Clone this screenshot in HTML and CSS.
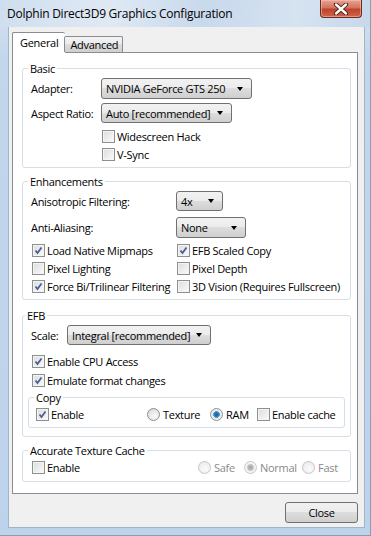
FILE: index.html
```html
<!DOCTYPE html>
<html lang="en">
  <head>
    <meta charset="UTF-8" />
    <title>Dolphin Direct3D9 Graphics Configuration</title>
    <link rel="stylesheet" href="styles.css">
  </head>
  <body>
    <div class="window">
      <div class="titlebar">
        <span class="title">Dolphin Direct3D9 Graphics Configuration</span>
        <div class="close-x">
          <svg width="16" height="12" viewBox="0 0 16 12">
            <path d="M3 1.5 L13 10.5 M13 1.5 L3 10.5" stroke="#3b1a14" stroke-width="4.2" stroke-linecap="round" />
            <path d="M3 1.5 L13 10.5 M13 1.5 L3 10.5" stroke="#ffffff" stroke-width="2.4" stroke-linecap="round" />
          </svg>
        </div>
      </div>

      <div class="client">
        <div class="tabs">
          <div class="tab active">General</div>
          <div class="tab">Advanced</div>
        </div>

        <div class="panel">
          <!-- Basic -->
          <fieldset class="group basic">
            <legend>Basic</legend>
            <div class="row row-21">
              <span class="lbl">Adapter:</span>
              <div class="combo w-adapter">NVIDIA GeForce GTS 250</div>
            </div>
            <div class="row row-20 gap-4">
              <span class="lbl">Aspect Ratio:</span>
              <div class="combo w-aspect">Auto [recommended]</div>
            </div>
            <div class="row check-row gap-4">
              <span class="lbl"></span>
              <label class="check"><span class="box"></span>Widescreen Hack</label>
            </div>
            <div class="row check-row">
              <span class="lbl"></span>
              <label class="check"><span class="box"></span>V-Sync</label>
            </div>
          </fieldset>

          <!-- Enhancements -->
          <fieldset class="group enh">
            <legend>Enhancements</legend>
            <div class="row row-20">
              <span class="lbl">Anisotropic Filtering:</span>
              <div class="combo w-aniso">4x</div>
            </div>
            <div class="row row-21 gap-6">
              <span class="lbl">Anti-Aliasing:</span>
              <div class="combo w-aa">None</div>
            </div>
            <div class="row check-row gap-3">
              <label class="check lbl"><span class="box checked"></span>Load Native Mipmaps</label>
              <label class="check"><span class="box checked"></span>EFB Scaled Copy</label>
            </div>
            <div class="row check-row">
              <label class="check lbl"><span class="box"></span>Pixel Lighting</label>
              <label class="check"><span class="box"></span>Pixel Depth</label>
            </div>
            <div class="row check-row">
              <label class="check lbl"><span class="box checked"></span>Force Bi/Trilinear Filtering</label>
              <label class="check"><span class="box"></span>3D Vision (Requires Fullscreen)</label>
            </div>
          </fieldset>

          <!-- EFB -->
          <fieldset class="group efb">
            <legend>EFB</legend>
            <div class="row row-20">
              <span class="lbl">Scale:</span>
              <div class="combo w-scale">Integral [recommended]</div>
            </div>
            <div class="row check-row tall gap-7">
              <label class="check"><span class="box checked"></span>Enable CPU Access</label>
            </div>
            <div class="row check-row tall">
              <label class="check"><span class="box checked"></span>Emulate format changes</label>
            </div>

            <fieldset class="group copy">
              <legend>Copy</legend>
              <div class="row check-row">
                <label class="check w-copy-enable"><span class="box checked"></span>Enable</label>
                <label class="check w-texture"><span class="radio"></span>Texture</label>
                <label class="check w-ram"><span class="radio on"></span>RAM</label>
                <label class="check"><span class="box"></span>Enable cache</label>
              </div>
            </fieldset>
          </fieldset>

          <!-- Accurate Texture Cache -->
          <fieldset class="group atc">
            <legend>Accurate Texture Cache</legend>
            <div class="row check-row">
              <label class="check w-atc-enable"><span class="box"></span>Enable</label>
              <label class="check disabled w-safe"><span class="radio"></span>Safe</label>
              <label class="check disabled w-normal"><span class="radio on"></span>Normal</label>
              <label class="check disabled"><span class="radio"></span>Fast</label>
            </div>
          </fieldset>
        </div>

        <div class="buttons">
          <button class="btn">Close</button>
        </div>
      </div>
    </div>
  </body>
</html>
```

FILE: styles.css
```css
html,
body {
  margin: 0;
  padding: 0;
}
body {
  width: 371px;
  height: 536px;
  overflow: hidden;
  font-family: "Open Sans", "Noto Sans", sans-serif;
  font-size: 11px;
  letter-spacing: -0.3px;
  color: #000;
  background: #c4d7ec;
}
.window {
  display: flex;
  flex-direction: column;
  width: 371px;
  height: 536px;
  box-sizing: border-box;
  background: linear-gradient(#d6e3f1, #c2d6ec 60px, #bdd3eb);
  border-right: 1px solid #8d9db0;
  border-bottom: 1px solid #8d9db0;
}
.titlebar {
  height: 27px;
  display: flex;
  justify-content: space-between;
  align-items: flex-start;
  background: linear-gradient(100deg, #cfdeee 0%, #dfe9f4 30%, #c8d9ec 55%, #d6e3f1 80%, #c7d8eb 100%);
}
.title {
  margin: 6px 0 0 7px;
  font-size: 12px;
  letter-spacing: -0.25px;
  line-height: 16px;
}
.close-x {
  width: 42px;
  height: 18px;
  margin-right: 8px;
  box-sizing: border-box;
  border: 1px solid #6d2a1f;
  border-top: none;
  border-radius: 0 0 4px 4px;
  background: linear-gradient(#e8a493, #d2735e 45%, #c0432c 55%, #d0644a);
  box-shadow: inset 0 0 0 1px rgba(255, 200, 190, 0.5);
  display: flex;
  align-items: center;
  justify-content: center;
}

.client {
  flex: 1;
  margin: 0 5px 7px 8px;
  background: #f0f0f0;
  border: 1px solid #a2b4c8;
  border-top: none;
  display: flex;
  flex-direction: column;
  padding: 6px 6px 0 3px;
}

/* tabs */
.tabs {
  display: flex;
  align-items: flex-end;
  height: 19px;
  position: relative;
  z-index: 1;
}
.tab {
  height: 16px;
  line-height: 15px;
  padding: 0 4px 0 5px;
  border: 1px solid #898c95;
  border-bottom: none;
  border-radius: 2px 2px 0 0;
  background: linear-gradient(#f3f3f3, #ebebeb 50%, #dddddd 50%, #cfcfcf);
  box-sizing: border-box;
}
.tab.active {
  height: 21px;
  margin-bottom: -1px;
  line-height: 19px;
  padding: 0 7px 0 7px;
  background: #fff;
  border-right: none;
  margin-right: -1px;
}
.tab.active + .tab {
  border-left: 1px solid #898c95;
}

.panel {
  height: 442px;
  box-sizing: border-box;
  border: 1px solid #898c95;
  background: #fff;
  padding: 8px 6px 0 9px;
}

/* group boxes */
.group {
  margin: 0;
  padding: 0 5px 4px 8px;
  border: 1px solid #d5dfe5;
  border-radius: 3px;
}
.group legend {
  padding: 0 2px;
  margin-left: -3px;
  line-height: 15px;
}
.group.enh {
  margin-top: 6px;
}
.group.efb {
  margin-top: 8px;
  padding-left: 5px;
  padding-bottom: 8px;
}
.group.efb > .row {
  margin-left: 3px;
}
.group.copy {
  padding-left: 6px;
  padding-bottom: 4px;
}
.group.copy legend {
  margin-left: -1px;
}
.group.atc {
  margin-top: 6px;
  padding-bottom: 5px;
}

/* rows */
.row {
  display: flex;
  align-items: center;
}
.basic > .row:first-of-type,
.enh > .row:first-of-type,
.efb > .row:first-of-type {
  margin-top: 2px;
}
.row-20 {
  height: 20px;
}
.row-21 {
  height: 21px;
}
.check-row {
  height: 18px;
}
.check-row.tall {
  height: 19px;
}
.gap-3 {
  margin-top: 3px;
}
.gap-4 {
  margin-top: 4px;
}
.gap-6 {
  margin-top: 6px;
}
.gap-7 {
  margin-top: 7px;
}
.basic .lbl {
  width: 70px;
  flex: none;
}
.enh .lbl {
  width: 145px;
  flex: none;
}
.efb .lbl {
  width: 36px;
  flex: none;
}

/* combo boxes */
.combo {
  position: relative;
  height: 100%;
  box-sizing: border-box;
  border: 1px solid #707070;
  border-radius: 3px;
  background: linear-gradient(#f2f2f2, #ebebeb 50%, #dddddd 50%, #cfcfcf);
  padding-left: 4px;
  display: flex;
  align-items: center;
}
.combo::after {
  content: "";
  position: absolute;
  right: 8px;
  top: 50%;
  margin-top: -2px;
  border-left: 3.5px solid transparent;
  border-right: 3.5px solid transparent;
  border-top: 4px solid #000;
}
.w-adapter {
  width: 151px;
}
.w-aspect {
  width: 131px;
}
.w-aniso {
  width: 47px;
}
.w-aa {
  width: 70px;
}
.w-scale {
  width: 144px;
}

/* check boxes and radios */
.check {
  display: flex;
  align-items: center;
  white-space: nowrap;
}
.box {
  width: 13px;
  height: 13px;
  flex: none;
  box-sizing: border-box;
  margin: 0 2px 0 1px;
  border: 1px solid #8e8f8f;
  background: linear-gradient(135deg, #dcdcdc, #fbfbfb);
  box-shadow: inset 0 0 0 1px #f4f4f4;
}
.box.checked {
  background:
    url("data:image/svg+xml,%3Csvg xmlns='http://www.w3.org/2000/svg' width='11' height='11'%3E%3Cpath d='M2.5 5.5 L4.5 8 L8.5 2.5' fill='none' stroke='%234a5f97' stroke-width='1.8'/%3E%3C/svg%3E") center / 11px 11px no-repeat,
    linear-gradient(135deg, #dcdcdc, #fbfbfb);
}
.radio {
  width: 13px;
  height: 13px;
  flex: none;
  box-sizing: border-box;
  margin-right: 3px;
  border: 1px solid #8e8f8f;
  border-radius: 50%;
  background: radial-gradient(circle at 60% 65%, #fdfdfd, #d2d2d2);
}
.radio.on {
  background: radial-gradient(circle at 50% 50%, #1f5f9a 0, #2b77b5 2px, #5ea6d8 3.2px, #e6e6e6 3.6px, #f5f5f5 6px);
}
.check.disabled {
  color: #8a8a8a;
}
.check.disabled .radio {
  border-color: #c6c6c6;
  background: radial-gradient(circle at 60% 65%, #fbfbfb, #e6e6e6);
}
.check.disabled .radio.on {
  background: radial-gradient(circle at 50% 50%, #a8a8a8 0, #b8b8b8 2.5px, #d8d8d8 3.4px, #f2f2f2 4px, #f7f7f7 6px);
}
.w-copy-enable {
  width: 112px;
}
.w-texture {
  width: 63px;
}
.w-ram {
  width: 46px;
}
.w-atc-enable {
  width: 167px;
}
.w-safe {
  width: 46px;
}
.w-normal {
  width: 58px;
}

/* bottom button */
.buttons {
  display: flex;
  justify-content: flex-end;
  padding-top: 8px;
}
.btn {
  width: 73px;
  height: 21px;
  padding: 0;
  font-family: inherit;
  font-size: 11px;
  letter-spacing: inherit;
  color: #000;
  border: 1px solid #707070;
  border-radius: 3px;
  background: linear-gradient(#f2f2f2, #ebebeb 50%, #dddddd 50%, #cfcfcf);
}
```
